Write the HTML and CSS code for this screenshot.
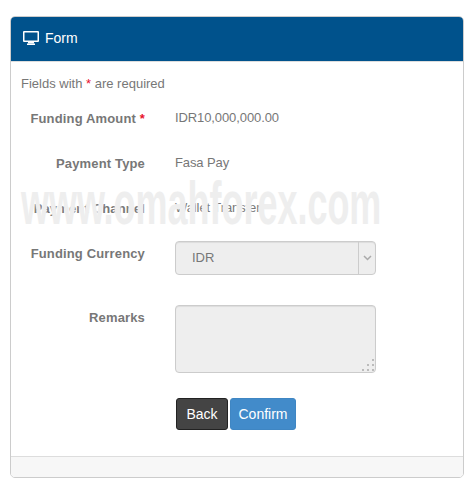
FILE: index.html
```
<!DOCTYPE html>
<html lang="en">
<head>
<meta charset="utf-8">
<title>Form</title>
<link rel="stylesheet" href="styles.css">
</head>
<body>
<div class="panel">
  <div class="panel-heading">
    <svg class="icon" width="16" height="14" viewBox="0 0 16 14"><path fill="#fff" fill-rule="evenodd" d="M1 0h14a1 1 0 0 1 1 1v9a1 1 0 0 1-1 1H1a1 1 0 0 1-1-1V1a1 1 0 0 1 1-1zM1.500 1.500v8h13v-8z"/><rect fill="#fff" x="5" y="11" width="6" height="1.500"/><rect fill="#fff" x="4" y="12.500" width="8" height="1.500"/></svg>
    <span>Form</span>
  </div>
  <div class="panel-body">
    <p class="note">Fields with <span class="req">*</span> are required</p>
    <div class="row first"><div class="label">Funding Amount <span class="req">*</span></div><div class="value">IDR10,000,000.00</div></div>
    <div class="row"><div class="label">Payment Type</div><div class="value">Fasa Pay</div></div>
    <div class="row"><div class="label">Payment Channel</div><div class="value">Wallet Transfer</div></div>
    <div class="row row-select"><div class="label">Funding Currency</div>
      <div class="select"><span class="select-text">IDR</span><span class="select-arrow"><svg width="9" height="6" viewBox="0 0 9 6"><path d="M1 1l3.500 3.500L8 1" fill="none" stroke="#aaa" stroke-width="1.500"/></svg></span></div>
    </div>
    <div class="row row-text"><div class="label">Remarks</div>
      <div class="textarea"><svg class="grip" width="13" height="13" viewBox="0 0 13 13"><g fill="#bbb"><rect x="10" y="0" width="2" height="2"/><rect x="5" y="5" width="2" height="2"/><rect x="10" y="5" width="2" height="2"/><rect x="0" y="10" width="2" height="2"/><rect x="5" y="10" width="2" height="2"/><rect x="10" y="10" width="2" height="2"/></g></svg></div>
    </div>
    <div class="actions"><a class="btn btn-dark">Back</a><a class="btn btn-blue">Confirm</a></div>
  </div>
  <div class="panel-footer"></div>
</div>
<div class="watermark">www.omahforex.com</div>
</body>
</html>
```
FILE: styles.css
```
* { box-sizing: border-box; }
html, body { height: 100%; }
body {
  margin: 0;
  padding: 16px 10px 0;
  background: #fff;
  font-family: "Liberation Sans", Arial, sans-serif;
  font-size: 13px;
  color: #777;
  position: relative;
  overflow: hidden;
}
.panel {
  width: 454px;
  height: 462px;
  border: 1px solid #ccc;
  border-radius: 5px;
  display: flex;
  flex-direction: column;
  overflow: hidden;
}
.panel-heading {
  height: 45px;
  flex: none;
  background: #00528c;
  border-bottom: 1px solid #ddd;
  color: #fff;
  display: flex;
  align-items: center;
  padding: 0 0 2px 12px;
  gap: 6px;
  font-size: 14px;
}
.icon { flex: none; }
.panel-body { flex: 1; padding: 14px 10px 0; }
.note { margin: 0; line-height: 16px; }
.req { color: #e8112d; font-weight: normal; }
.row {
  display: grid;
  grid-template-columns: 124px 1fr;
  column-gap: 30px;
  height: 45px;
  line-height: 20px;
}
.row.first { margin-top: 17px; }
.label { font-weight: bold; text-align: right; letter-spacing: .15px; }
.label .req { font-weight: bold; }
.value { margin-top: -1px; letter-spacing: -.1px; }
.row-select { height: 64px; }
.row-text { height: 90px; }
.select {
  width: 201px;
  height: 34px;
  margin-top: -3px;
  background: #eee;
  border: 1px solid #ccc;
  border-radius: 4px;
  box-shadow: inset 0 1px 1px rgba(0,0,0,.075);
  display: flex;
  align-items: center;
  justify-content: space-between;
}
.select-text { padding-left: 16px; }
.select-arrow {
  width: 17px;
  height: 100%;
  border-left: 1px solid #ccc;
  display: flex;
  align-items: center;
  justify-content: center;
}
.textarea {
  width: 201px;
  height: 68px;
  margin-top: -3px;
  background: #eee;
  border: 1px solid #ccc;
  border-radius: 4px;
  box-shadow: inset 0 1px 1px rgba(0,0,0,.075);
  position: relative;
}
.grip { position: absolute; right: 0; bottom: 0; }
.actions { display: flex; gap: 2px; margin-left: 155px; }
.btn {
  height: 32px;
  display: flex;
  align-items: center;
  justify-content: center;
  border-radius: 3px;
  color: #fff;
  font-size: 14px;
}
.btn-dark { width: 52px; background: #444; border: 1px solid #222; }
.btn-blue { width: 66px; background: #428bca; border: 1px solid #3f86c3; }
.panel-footer {
  height: 21px;
  flex: none;
  background: #f7f7f7;
  border-top: 1px solid #ddd;
}
.watermark {
  position: absolute;
  left: 21px;
  top: 168px;
  white-space: nowrap;
  font-size: 62px;
  font-weight: bold;
  line-height: 70px;
  color: #eee;
  text-shadow: 0 0 2px #fff;
  transform-origin: 0 50%;
  transform: scaleX(.58);
}
```
